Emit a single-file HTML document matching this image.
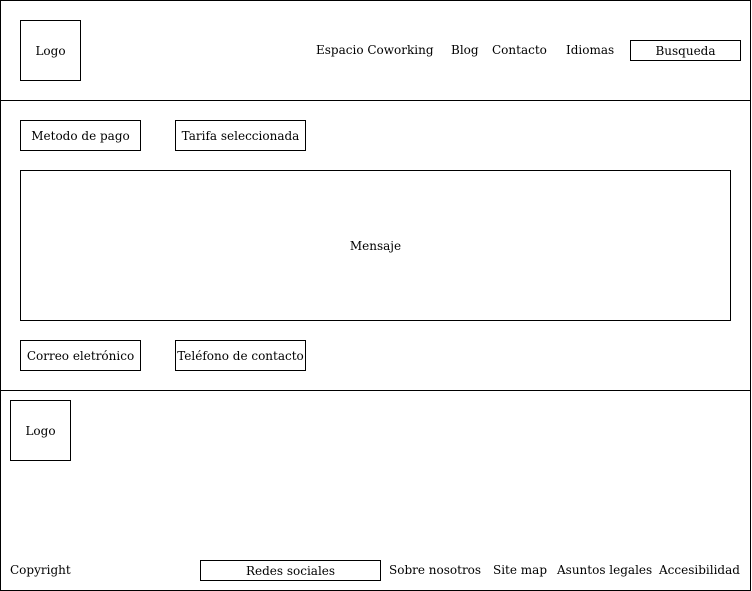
<!DOCTYPE html>
<html><head><style>
body{margin:0;width:752px;height:591px;position:relative;font-family:"DejaVu Serif",serif;font-size:12px;color:#000;background:#fff;overflow:hidden}
div{position:absolute;box-sizing:border-box}
.b{border:1px solid #000;display:flex;align-items:center;justify-content:center;white-space:nowrap}
.t{white-space:nowrap;line-height:14px}
.l{background:#000}
</style></head><body>
<div style="left:0;top:0;width:751px;height:591px;border:1px solid #000"></div>
<div class="l" style="left:0;top:100px;width:751px;height:1px"></div>
<div class="l" style="left:0;top:390px;width:751px;height:1px"></div>
<div class="b" style="left:20px;top:20px;width:61px;height:61px">Logo</div>
<div class="t" style="left:316px;top:43px">Espacio Coworking</div>
<div class="t" style="left:451px;top:43px">Blog</div>
<div class="t" style="left:492px;top:43px">Contacto</div>
<div class="t" style="left:566px;top:43px">Idiomas</div>
<div class="b" style="left:630px;top:40px;width:111px;height:21px">Busqueda</div>
<div class="b" style="left:20px;top:120px;width:121px;height:31px">Metodo de pago</div>
<div class="b" style="left:175px;top:120px;width:131px;height:31px">Tarifa seleccionada</div>
<div class="b" style="left:20px;top:170px;width:711px;height:151px">Mensaje</div>
<div class="b" style="left:20px;top:340px;width:121px;height:31px">Correo eletrónico</div>
<div class="b" style="left:175px;top:340px;width:131px;height:31px">Teléfono de contacto</div>
<div class="b" style="left:10px;top:400px;width:61px;height:61px">Logo</div>
<div class="t" style="left:10px;top:563px">Copyright</div>
<div class="b" style="left:200px;top:560px;width:181px;height:21px">Redes sociales</div>
<div class="t" style="left:389px;top:563px">Sobre nosotros</div>
<div class="t" style="left:493px;top:563px">Site map</div>
<div class="t" style="left:557px;top:563px">Asuntos legales</div>
<div class="t" style="left:659px;top:563px">Accesibilidad</div>
</body></html>
